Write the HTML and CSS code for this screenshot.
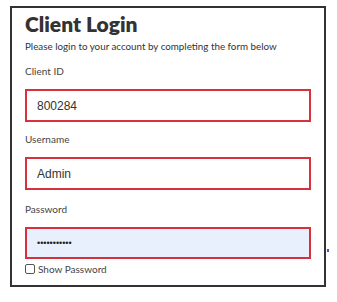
FILE: index.html
```html
<!DOCTYPE html>
<html>
<head>
<meta charset="utf-8">
<link rel="stylesheet" href="styles.css">
</head>
<body>
<div class="card">
  <h1 class="title">Client Login</h1>
  <p class="sub">Please login to your account by completing the form below</p>
  <label class="lbl lbl-first">Client ID</label>
  <div class="field">800284</div>
  <label class="lbl lbl-user">Username</label>
  <div class="field">Admin</div>
  <label class="lbl lbl-pw">Password</label>
  <div class="field field-pw">•••••••••••</div>
  <div class="show"><span class="cb"></span><span>Show Password</span></div>
  <span class="mark"></span>
</div>
</body>
</html>
```
FILE: styles.css
```css
html, body { margin: 0; padding: 0; background: #fff; }
body { width: 337px; height: 302px; position: relative; }
.card {
  position: absolute; left: 10px; top: 6px;
  width: 299px; height: 277px;
  border: 2px solid #333;
  padding: 0 0 0 13px;
  box-sizing: content-box;
  display: flex; flex-direction: column; align-items: flex-start;
  font-family: "Lato", "Open Sans", sans-serif;
  color: #333;
}
.title { margin: 4px 0 0; font-size: 21px; line-height: 24px; font-weight: 800; color: #333; }
.sub { margin: 4px 0 0; font-size: 9.8px; line-height: 12px; color: #333; }
.lbl { display: block; font-size: 10px; line-height: 12px; color: #444; }
.lbl-first { margin-top: 13px; }
.lbl-user { margin-top: 11px; }
.lbl-pw { margin-top: 13px; }
.field {
  box-sizing: border-box; width: 286px; height: 33px;
  border: 2px solid #d7313e; background: #fff;
  margin-top: 12px; padding: 0 10px;
  font-family: "Liberation Sans", Arial, sans-serif; font-size: 12px; color: #333;
  display: flex; align-items: center;
}
.field-pw { height: 32px; background: #e8f0fe; font-size: 9px; letter-spacing: 0; color: #222; }
.show { margin-top: 4px; display: flex; align-items: center; gap: 3px; font-size: 10px; line-height: 12px; color: #444; }
.cb { width: 8px; height: 8px; border: 1px solid #555; border-radius: 2px; background: #fff; }
.mark { position: absolute; left: 315px; top: 241px; width: 2px; height: 3px; background: #3b5fc4; }
```
